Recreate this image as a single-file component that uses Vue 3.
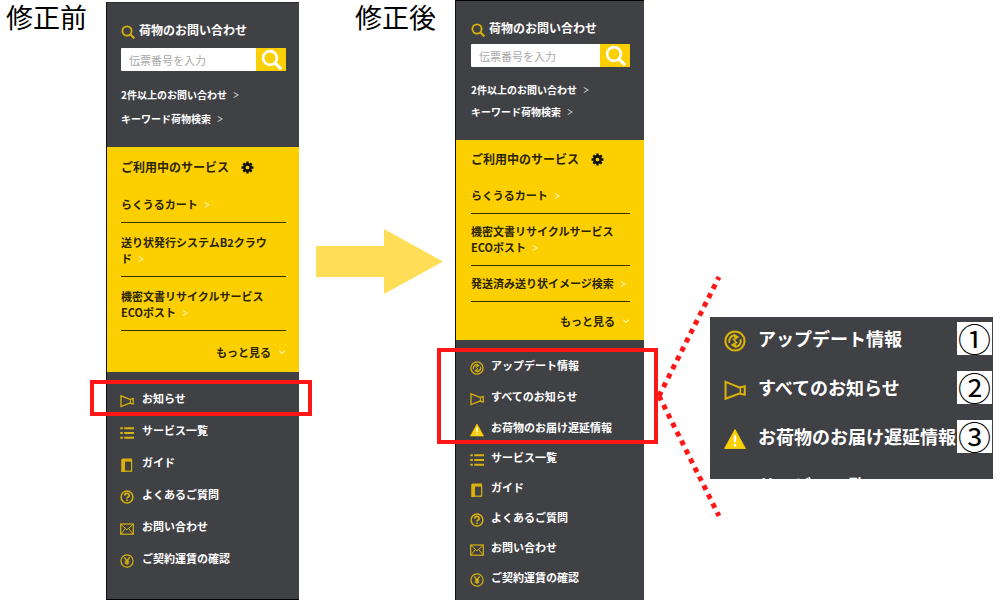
<script setup>
import { h } from 'vue'

const stroke = { fill: 'none', stroke: 'currentColor', 'stroke-width': 1.5 }
const shapes = {
  search: () => [
    h('circle', { cx: 6, cy: 6, r: 4.6, ...stroke, 'stroke-width': 1.8 }),
    h('path', { d: 'M9.2 9.2 13.4 13.4', ...stroke, 'stroke-width': 2.1 }),
  ],
  update: () => [
    h('circle', { cx: 7, cy: 7, r: 6.1, ...stroke, 'stroke-width': 1.3 }),
    h('path', { d: 'M3.5 8.2A3.8 3.8 0 0 1 6.6 3.3M10.5 5.8A3.8 3.8 0 0 1 7.4 10.7', ...stroke, 'stroke-width': 1.3 }),
    h('path', { d: 'M6.2 2.2 9.8 4.4 6.6 6.6ZM7.8 11.8 4.2 9.6 7.4 7.4Z', fill: 'currentColor' }),
    h('path', { d: 'M5.6 5.6 8.4 8.4', ...stroke, 'stroke-width': 1 }),
  ],
  horn: () => [
    h('path', { d: 'M1 1.8 9.8 5.4 13.2 4.6V10L9.8 9.2 1 12.6Z', ...stroke, 'stroke-width': 1.3 }),
    h('path', { d: 'M10.4 5.4V9.2', ...stroke, 'stroke-width': 1 }),
  ],
  warning: () => [
    h('path', { d: 'M7 1 13.6 13H0.4Z', fill: '#fccf00', stroke: '#fccf00', 'stroke-width': 0.6, 'stroke-linejoin': 'round' }),
    h('path', { d: 'M7 4.6V9M7 10.2V11.8', ...stroke, stroke: '#fff' }),
  ],
  list: () => [
    h('path', { d: 'M0.3 2.2H2.8M0.3 7H2.8M0.3 11.8H2.8M4.2 2.2H14M4.2 7H14M4.2 11.8H14', ...stroke, 'stroke-width': 1.9 }),
  ],
  guide: () => [
    h('path', { d: 'M1.2 1.4 2.6 0.4H12V3H5V14H1.2Z', fill: 'currentColor' }),
    h('rect', { x: 4.4, y: 3, width: 7.2, height: 10.2, ...stroke, 'stroke-width': 1.2 }),
  ],
  question: () => [
    h('circle', { cx: 7, cy: 7, r: 5.9, ...stroke }),
    h('path', { d: 'M4.9 5.6A2.1 2 0 1 1 7.8 7.2Q7 7.6 7 8.6M7 9.5V11', ...stroke, 'stroke-width': 1.7 }),
  ],
  mail: () => [
    h('rect', { x: 0.7, y: 2, width: 12.6, height: 10.2, ...stroke, 'stroke-width': 1.2 }),
    h('path', { d: 'M1 2.4 7 7.8 13 2.4M1 12 5.2 6.6M13 12 8.8 6.6', ...stroke, 'stroke-width': 1 }),
  ],
  yen: () => [
    h('circle', { cx: 7, cy: 7, r: 6.1, ...stroke, 'stroke-width': 1.2 }),
    h('path', { d: 'M4.4 3.4 7 7 9.6 3.4M7 7V11M4.8 7.2H9.2M4.8 9H9.2', ...stroke, 'stroke-width': 1.3 }),
  ],
  gear: () => [
    h('circle', { cx: 7, cy: 7, r: 3.4, ...stroke, 'stroke-width': 2.8 }),
    h('path', {
      d: 'M7 0.6V3M7 11V13.4M0.6 7H3M11 7H13.4M2.5 2.5 4.2 4.2M9.8 9.8 11.5 11.5M2.5 11.5 4.2 9.8M9.8 4.2 11.5 2.5',
      ...stroke,
      'stroke-width': 2.6,
    }),
  ],
  right: () => [h('path', { d: 'M3 2.5 10.5 7 3 11.5', ...stroke, 'stroke-width': 1.8 })],
  down: () => [h('path', { d: 'M2 4.5 7 9.5 12 4.5', ...stroke, 'stroke-width': 1.8 })],
}
const Icon = (props) =>
  h('svg', { viewBox: '0 0 14 14', 'aria-hidden': 'true' }, shapes[props.name]())
Icon.props = ['name']

const common = [
  { icon: 'list', text: 'サービス一覧' },
  { icon: 'guide', text: 'ガイド' },
  { icon: 'question', text: 'よくあるご質問' },
  { icon: 'mail', text: 'お問い合わせ' },
  { icon: 'yen', text: 'ご契約運賃の確認' },
]
const news = [
  { icon: 'update', text: 'アップデート情報', mark: '①' },
  { icon: 'horn', text: 'すべてのお知らせ', mark: '②' },
  { icon: 'warning', text: 'お荷物のお届け遅延情報', mark: '③' },
]
const panels = [
  {
    id: 'before',
    title: '修正前',
    services: ['らくうるカート', '送り状発行システムB2クラウド', '機密文書リサイクルサービスECOポスト'],
    marked: [{ icon: 'horn', text: 'お知らせ' }],
  },
  {
    id: 'after',
    title: '修正後',
    services: ['らくうるカート', '機密文書リサイクルサービスECOポスト', '発送済み送り状イメージ検索'],
    marked: news,
  },
]
</script>

<template>
  <main class="page">
    <template v-for="panel in panels" :key="panel.id">
      <div class="lead">
        <h2 class="lead-title" :class="panel.id">{{ panel.title }}</h2>
        <svg v-if="panel.id === 'after'" class="arrow" viewBox="0 0 127 65" aria-hidden="true">
          <path d="M0 17H68V0L127 32.5 68 65V48H0Z" fill="#ffdd57" />
        </svg>
      </div>

      <aside class="panel" :class="panel.id">
        <section class="inquiry">
          <label class="inquiry-title" :for="panel.id + '-no'">
            <Icon name="search" class="icon" />荷物のお問い合わせ
          </label>
          <form class="search" @submit.prevent>
            <input :id="panel.id + '-no'" type="text" placeholder="伝票番号を入力" />
            <button type="submit" aria-label="検索"><Icon name="search" class="glass" /></button>
          </form>
          <ul class="quick">
            <li><a href="#">2件以上のお問い合わせ<Icon name="right" class="chevron" /></a></li>
            <li><a href="#">キーワード荷物検索<Icon name="right" class="chevron" /></a></li>
          </ul>
        </section>

        <section class="services">
          <h3>ご利用中のサービス<Icon name="gear" class="gear" /></h3>
          <ul>
            <li v-for="s in panel.services" :key="s">
              <a href="#">{{ s }}<Icon name="right" class="chevron" /></a>
            </li>
          </ul>
          <button type="button" class="more">もっと見る<Icon name="down" class="chevron" /></button>
        </section>

        <nav class="menu">
          <ul class="marked">
            <li v-for="m in panel.marked" :key="m.text">
              <a href="#"><Icon :name="m.icon" class="icon" />{{ m.text }}</a>
            </li>
          </ul>
          <ul>
            <li v-for="m in common" :key="m.text">
              <a href="#"><Icon :name="m.icon" class="icon" />{{ m.text }}</a>
            </li>
          </ul>
        </nav>
      </aside>
    </template>

    <div class="detail">
      <svg class="rays" viewBox="0 0 64 242" aria-hidden="true">
        <path d="M2 120 62 1M2 120 62 240" fill="none" stroke="#ff1616" stroke-width="5" stroke-dasharray="5 5" />
      </svg>
      <ul class="callout">
        <li v-for="n in news" :key="n.text">
          <Icon :name="n.icon" class="icon" />
          <span>{{ n.text }}</span>
          <b class="mark">{{ n.mark }}</b>
        </li>
        <li class="cut"><span>サービス一覧</span></li>
      </ul>
    </div>
  </main>
</template>

<style>
body {
  background: #fff;
}
</style>

<style scoped>
.page {
  display: grid;
  grid-template-columns:
    minmax(0, 106fr) minmax(0, 193fr) minmax(0, 156fr) minmax(0, 189fr)
    minmax(0, 356fr);
  min-height: 100vh;
  font-family: "Noto Sans CJK JP", "Liberation Sans", sans-serif;
  font-size: 11px;
}
ul {
  list-style: none;
  margin: 0;
  padding: 0;
}
a {
  color: inherit;
  text-decoration: none;
}
svg {
  display: block;
  flex: none;
}

.lead-title {
  margin: 0;
  font-size: 27px;
  line-height: 34px;
  font-weight: 400;
  color: #000;
  white-space: nowrap;
}
.lead-title.before {
  padding-left: 6px;
}
.lead-title.after {
  padding-left: 56px;
}
.arrow {
  width: 127px;
  margin: 195px 0 0 17px;
}

.panel {
  --side: 14px;
  --end: 13px;
  --row: 32px;
  --marked-row: 32px;
  box-sizing: border-box;
  background: #404145;
  color: #fff;
  border-left: 1px solid #111;
}
.panel.before {
  margin-top: 2px;
  border-top: 1px solid #2b2b30;
  border-bottom: 1px solid #000;
}
.panel.after {
  --side: 15px;
  --end: 14px;
  --row: 30px;
  --marked-row: 31px;
  border-top: 1px solid #000;
}
.inquiry {
  padding: 17px var(--end) 19px var(--side);
}
.inquiry-title {
  display: flex;
  align-items: center;
  gap: 4px;
  font-size: 12px;
  line-height: 20px;
  font-weight: 700;
}
.icon {
  width: 14px;
  height: 14px;
  color: #d9b20c;
  position: relative;
  top: 2px;
}
.search {
  display: flex;
  height: 23px;
  margin: 8px 0 15px;
}
.after .search {
  margin: 6px 0 14px;
}
.search input {
  flex: 1;
  min-width: 0;
  box-sizing: border-box;
  border: 0;
  border-radius: 1px 0 0 1px;
  padding: 0 8px;
  background: #fff;
  color: #333;
  font: inherit;
}
.search input::placeholder {
  color: #a9a9a9;
  opacity: 1;
}
.search button {
  width: 30px;
  padding: 0;
  border: 0;
  background: #fccf00;
  color: #fff;
  display: grid;
  place-items: center;
}
.glass {
  width: 21px;
  height: 21px;
}
.quick {
  display: grid;
  gap: 6px;
  font-size: 10px;
  line-height: 18px;
  font-weight: 700;
}
.after .quick {
  gap: 4px;
}
.chevron {
  display: inline-block;
  width: 8px;
  height: 8px;
  margin-left: 5px;
  color: #c4c4c6;
}

.services {
  padding: 10px var(--end) 12px var(--side);
  background: #fccf00;
  color: #2a2500;
  font-weight: 700;
  line-height: 16px;
}
.after .services {
  padding-top: 9px;
  padding-bottom: 11px;
}
.services h3 {
  display: flex;
  align-items: center;
  gap: 12px;
  margin: 0 0 8px;
  font-size: 12px;
  line-height: 20px;
  font-weight: 700;
}
.after .services h3 {
  margin-bottom: 9px;
}
.gear {
  width: 13px;
  height: 13px;
  color: #111;
}
.services li {
  padding: 11px 12px 10px 0;
  border-bottom: 1px solid #3a3000;
}
.after .services li {
  padding-top: 9px;
  padding-right: 0;
}
.services .chevron {
  color: #fff3b0;
}
.more {
  display: flex;
  align-items: center;
  gap: 2px;
  margin: 13px 0 0 auto;
  padding: 0;
  border: 0;
  background: none;
  color: inherit;
  font: inherit;
}
.after .more {
  margin-top: 11px;
}

.menu {
  padding-top: 10px;
  font-weight: 700;
}
.after .menu {
  padding-top: 9px;
}
.menu a {
  display: flex;
  align-items: center;
  gap: 8px;
  height: var(--row);
  padding-left: 13px;
  white-space: nowrap;
}
.menu .icon {
  top: 3px;
}
.after .menu a {
  gap: 7px;
  padding-left: 14px;
}
.menu .marked a {
  height: var(--marked-row);
}
.marked {
  position: relative;
}
.marked::after {
  content: "";
  position: absolute;
  inset: -2px -13px -2px -17px;
  border: 4px solid #ff1616;
  pointer-events: none;
}
.after .marked::after {
  inset: -1px -14px -2px -19px;
}

.detail {
  position: relative;
  padding: 317px 7px 0 66px;
}
.rays {
  position: absolute;
  left: 13px;
  top: 276px;
  width: 64px;
  height: 242px;
}
.callout {
  position: relative;
  padding: 5px 1px 0 14px;
  background: #404145;
  color: #fff;
  font-size: 18px;
  font-weight: 700;
  line-height: 33px;
  white-space: nowrap;
}
.callout li {
  display: flex;
  align-items: center;
  height: 33px;
  margin-bottom: 16px;
}
.callout .icon {
  width: 22px;
  height: 22px;
  margin-right: 12px;
}
.mark {
  flex: none;
  width: 35px;
  margin-left: auto;
  background: #fff;
  color: #000;
  font-size: 33px;
  line-height: 33px;
  font-weight: 400;
  text-align: center;
}
.callout .cut {
  display: block;
  height: 10px;
  margin: 0;
  padding-left: 34px;
  overflow: hidden;
}
</style>
